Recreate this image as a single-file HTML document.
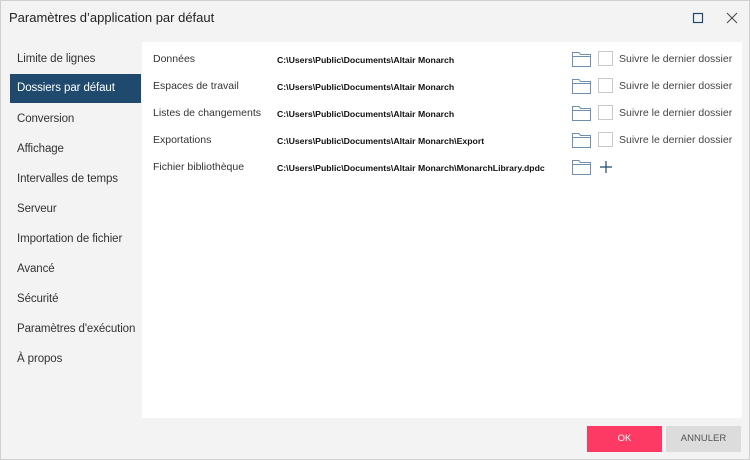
<!DOCTYPE html>
<html><head><style>
body{margin:0;width:750px;height:460px;background:#f3f3f3;font-family:"Liberation Sans",sans-serif;position:relative;overflow:hidden}
.win{position:absolute;left:0;top:0;width:748px;height:458px;border:1px solid #cfcfcf}
.title{position:absolute;left:9px;top:10px;font-size:13px;color:#222}
.nav{position:absolute;left:10px;width:131px;height:29px;line-height:29px;font-size:11.5px;color:#333;padding-left:7px;box-sizing:border-box;white-space:nowrap;letter-spacing:-0.1px}
.sel{background:#1f4a6e;color:#fff}
.panel{position:absolute;left:142px;top:42px;width:600px;height:376px;background:#fff}
.lbl{position:absolute;left:153px;font-size:10.5px;color:#333}
.path{position:absolute;left:277px;font-size:8.7px;font-weight:bold;color:#111}
.fold{position:absolute;left:572px}
.cb{position:absolute;left:598px;width:15px;height:15px;border:1px solid #c8c8c8;box-sizing:border-box;background:#fff}
.fl{position:absolute;left:619px;font-size:10.5px;color:#444;white-space:nowrap}
.btn{position:absolute;top:426px;width:75px;height:26px;line-height:26px;text-align:center;font-size:9.5px}
</style></head><body>
<div class="win"></div>
<div class="title">Paramètres d’application par défaut</div>
<svg style="position:absolute;left:692px;top:12px" width="12" height="12"><rect x="1.5" y="1.5" width="9" height="9" fill="none" stroke="#1f4a6e" stroke-width="1.2"/></svg>
<svg style="position:absolute;left:726px;top:12px" width="12" height="12"><path d="M1 1L11 11M11 1L1 11" stroke="#444" stroke-width="1"/></svg>
<div class="nav" style="top:45px">Limite de lignes</div>
<div class="nav sel" style="top:74px">Dossiers par défaut</div>
<div class="nav" style="top:105px">Conversion</div>
<div class="nav" style="top:135px">Affichage</div>
<div class="nav" style="top:165px">Intervalles de temps</div>
<div class="nav" style="top:195px">Serveur</div>
<div class="nav" style="top:225px">Importation de fichier</div>
<div class="nav" style="top:255px">Avancé</div>
<div class="nav" style="top:285px">Sécurité</div>
<div class="nav" style="top:315px">Paramètres d'exécution</div>
<div class="nav" style="top:345px">À propos</div>
<div class="panel"></div>

<div class="lbl" style="top:53px">Données</div><div class="path" style="top:55px">C:\Users\Public\Documents\Altair Monarch</div>
<div class="lbl" style="top:80px">Espaces de travail</div><div class="path" style="top:82px">C:\Users\Public\Documents\Altair Monarch</div>
<div class="lbl" style="top:107px">Listes de changements</div><div class="path" style="top:109px">C:\Users\Public\Documents\Altair Monarch</div>
<div class="lbl" style="top:134px">Exportations</div><div class="path" style="top:136px">C:\Users\Public\Documents\Altair Monarch\Export</div>
<div class="lbl" style="top:161px">Fichier bibliothèque</div><div class="path" style="top:163px">C:\Users\Public\Documents\Altair Monarch\MonarchLibrary.dpdc</div>

<svg class="fold" style="top:51px" width="19" height="16"><path d="M0.5 1.5H7L8.5 3.5H18.5V15.5H0.5Z M0.5 5.5H18.5" fill="none" stroke="#6f8fae"/></svg>
<svg class="fold" style="top:78px" width="19" height="16"><path d="M0.5 1.5H7L8.5 3.5H18.5V15.5H0.5Z M0.5 5.5H18.5" fill="none" stroke="#6f8fae"/></svg>
<svg class="fold" style="top:105px" width="19" height="16"><path d="M0.5 1.5H7L8.5 3.5H18.5V15.5H0.5Z M0.5 5.5H18.5" fill="none" stroke="#6f8fae"/></svg>
<svg class="fold" style="top:132px" width="19" height="16"><path d="M0.5 1.5H7L8.5 3.5H18.5V15.5H0.5Z M0.5 5.5H18.5" fill="none" stroke="#6f8fae"/></svg>
<svg class="fold" style="top:159px" width="19" height="16"><path d="M0.5 1.5H7L8.5 3.5H18.5V15.5H0.5Z M0.5 5.5H18.5" fill="none" stroke="#6f8fae"/></svg>
<svg style="position:absolute;left:599px;top:160px" width="14" height="14"><path d="M7 1V13M1 7H13" stroke="#1f4a6e" stroke-width="1.2"/></svg>

<div class="cb" style="top:51px"></div><div class="fl" style="top:53px">Suivre le dernier dossier</div>
<div class="cb" style="top:78px"></div><div class="fl" style="top:80px">Suivre le dernier dossier</div>
<div class="cb" style="top:105px"></div><div class="fl" style="top:107px">Suivre le dernier dossier</div>
<div class="cb" style="top:132px"></div><div class="fl" style="top:134px">Suivre le dernier dossier</div>

<div class="btn" style="left:587px;background:#fd3a64;color:#fff">OK</div>
<div class="btn" style="left:666px;background:#dcdcdc;color:#555">ANNULER</div>
</body></html>
